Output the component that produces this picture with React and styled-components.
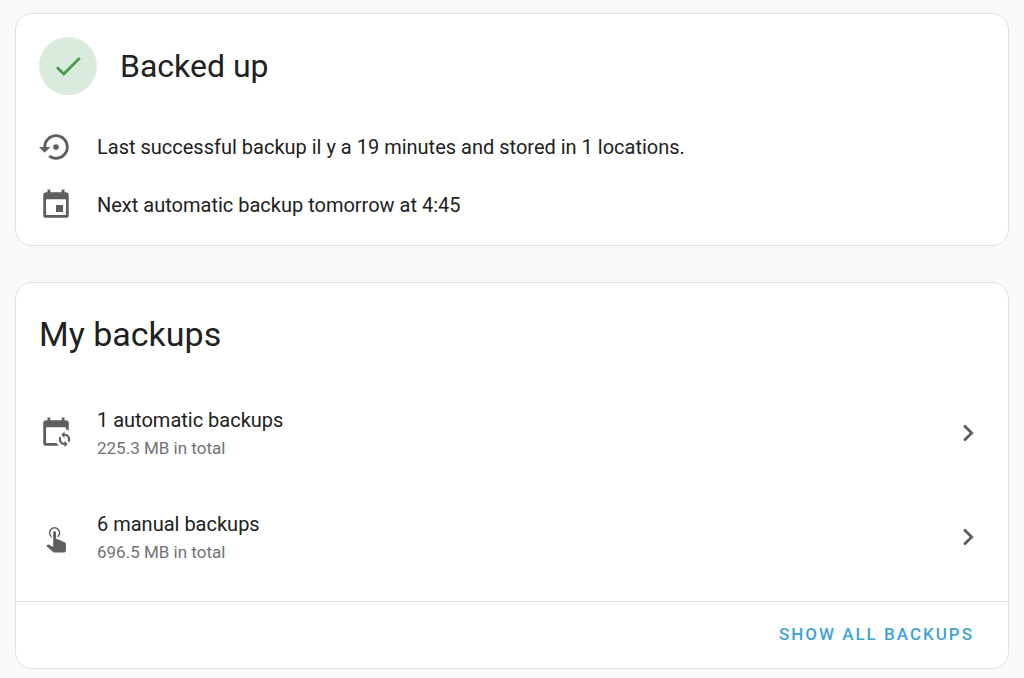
import React from 'react';
import styled, { createGlobalStyle } from 'styled-components';

const colors = {
    page: '#f9f9f9',
    card: '#ffffff',
    border: '#e0e0e0',
    text: '#212121',
    secondary: '#727272',
    icon: '#5e5e5e',
    primary: '#3fa3d3',
    success: '#43a047',
    successLight: '#d9ebdd',
};

const icons = {
    check: 'M21,7L9,19L3.5,13.5L4.91,12.09L9,16.17L19.59,5.59L21,7Z',
    restore:
        'M12,3A9,9 0 0,0 3,12H0L4,16L8,12H5A7,7 0 0,1 12,5A7,7 0 0,1 19,12A7,7 0 0,1 12,19C10.5,19 9.09,18.5 7.94,17.7L6.5,19.14C8.04,20.3 9.94,21 12,21A9,9 0 0,0 21,12A9,9 0 0,0 12,3M14,12A2,2 0 0,0 12,10A2,2 0 0,0 10,12A2,2 0 0,0 12,14A2,2 0 0,0 14,12Z',
    calendar:
        'M19,19H5V8H19M16,1V3H8V1H6V3H5C3.89,3 3,3.89 3,5V19A2,2 0 0,0 5,21H19A2,2 0 0,0 21,19V5C21,3.89 20.1,3 19,3H18V1M17,12H12V17H17V12Z',
    calendarSync:
        'M18,11V12.5C21.19,12.5 23.09,16.05 21.33,18.71L20.24,17.62C21.06,15.96 19.85,14 18,14V15.5L15.75,13.25L18,11M18,22V20.5C14.81,20.5 12.91,16.95 14.67,14.29L15.76,15.38C14.94,17.04 16.15,19 18,19V17.5L20.25,19.75L18,22M19,3H18V1H16V3H8V1H6V3H5A2,2 0 0,0 3,5V19A2,2 0 0,0 5,21H14C13.36,20.45 12.86,19.77 12.5,19H5V8H19V9.59C19.71,9.7 20.39,9.94 21,10.31V5A2,2 0 0,0 19,3Z',
    tap: 'M10,9A1,1 0 0,1 11,8A1,1 0 0,1 12,9V13.47L13.21,13.6L18.15,15.79C18.68,16.03 19,16.56 19,17.14V21.5C18.97,22.32 18.32,22.97 17.5,23H11C10.62,23 10.26,22.85 10,22.57L5.1,18.37L5.84,17.6C6.03,17.39 6.3,17.28 6.58,17.28H6.8L10,19V9M11,5A4,4 0 0,1 15,9C15,10.5 14.2,11.77 13,12.46V11.24C13.61,10.69 14,9.89 14,9A3,3 0 0,0 11,6A3,3 0 0,0 8,9C8,9.89 8.39,10.69 9,11.24V12.46C7.8,11.77 7,10.5 7,9A4,4 0 0,1 11,5Z',
    chevron: 'M8.59,16.58L13.17,12L8.59,7.41L10,6L16,12L10,18L8.59,16.58Z',
};

const GlobalStyle = createGlobalStyle`
    * {
        box-sizing: border-box;
    }
    body {
        margin: 0;
        background-color: ${colors.page};
        color: ${colors.text};
        font-family: Roboto, "Liberation Sans", sans-serif;
    }
    h1, h2, p, ul {
        margin: 0;
        padding: 0;
    }
`;

const Page = styled.main`
    display: flex;
    flex-direction: column;
    gap: 36px;
    padding: 13px 15px 9px;
`;
const Card = styled.section`
    background-color: ${colors.card};
    border: 1px solid ${colors.border};
    border-radius: 17px;
    overflow: hidden;
`;
const Summary = styled.div`
    padding: 23px;
`;
const SummaryHeader = styled.div`
    display: flex;
    align-items: center;
    gap: 23px;
    margin-bottom: 35px;
`;
const StatusBadge = styled.div`
    display: flex;
    align-items: center;
    justify-content: center;
    width: 58px;
    height: 58px;
    border-radius: 50%;
    background-color: ${colors.successLight};
    color: ${colors.success};
`;
const Title = styled.h1`
    font-size: 32px;
    font-weight: 400;
    line-height: 40px;
`;
const CardTitle = styled.h2`
    padding: 26px 23px 22px;
    font-size: 34px;
    font-weight: 400;
    line-height: 50px;
`;
const StatusList = styled.ul`
    display: flex;
    flex-direction: column;
    gap: 24px;
    list-style: none;
`;
const StatusItem = styled.li`
    display: flex;
    align-items: center;
    gap: 24px;
    font-size: 20px;
    line-height: 28px;
    color: ${colors.text};
`;
const Svg = styled.svg`
    flex: none;
    width: 34px;
    height: 34px;
    fill: currentColor;
`;
const StatusIcon = styled(Svg)`
    color: ${colors.icon};
`;
const BackupList = styled.ul`
    padding-bottom: 12px;
    list-style: none;
`;
const BackupButton = styled.button`
    display: flex;
    align-items: center;
    gap: 24px;
    width: 100%;
    height: 104px;
    padding: 0 23px;
    border: 0;
    background: none;
    color: ${colors.icon};
    font-family: inherit;
    text-align: left;
    cursor: pointer;
    &:hover {
        background-color: #f5f5f5;
    }
`;
const BackupText = styled.span`
    display: flex;
    flex: 1;
    flex-direction: column;
    padding-top: 2px;
`;
const Headline = styled.span`
    font-size: 20px;
    line-height: 28px;
    color: ${colors.text};
`;
const Supporting = styled.span`
    font-size: 17px;
    line-height: 28px;
    color: ${colors.secondary};
`;
const CardActions = styled.div`
    display: flex;
    justify-content: flex-end;
    padding: 8px 12px 10px;
    border-top: 1px solid ${colors.border};
`;
const TextLink = styled.a`
    padding: 0 22px;
    font-size: 17px;
    font-weight: 500;
    line-height: 48px;
    letter-spacing: 2px;
    text-transform: uppercase;
    text-decoration: none;
    color: ${colors.primary};
`;

function Icon({ name, as: Component = Svg }) {
    return (
        <Component viewBox="0 0 24 24" aria-hidden="true">
            <path d={icons[name]} />
        </Component>
    );
}

const statuses = [
    { icon: 'restore', text: 'Last successful backup il y a 19 minutes and stored in 1 locations.' },
    { icon: 'calendar', text: 'Next automatic backup tomorrow at 4:45' },
];

const backups = [
    { icon: 'calendarSync', title: '1 automatic backups', size: '225.3 MB in total' },
    { icon: 'tap', title: '6 manual backups', size: '696.5 MB in total' },
];

export default function App() {
    return (
        <>
            <GlobalStyle />
            <Page>
                <Card>
                    <Summary>
                        <SummaryHeader>
                            <StatusBadge>
                                <Icon name="check" />
                            </StatusBadge>
                            <Title>Backed up</Title>
                        </SummaryHeader>
                        <StatusList>
                            {statuses.map((item) => (
                                <StatusItem key={item.icon}>
                                    <Icon name={item.icon} as={StatusIcon} />
                                    <p>{item.text}</p>
                                </StatusItem>
                            ))}
                        </StatusList>
                    </Summary>
                </Card>
                <Card>
                    <CardTitle>My backups</CardTitle>
                    <BackupList>
                        {backups.map((item) => (
                            <li key={item.icon}>
                                <BackupButton type="button">
                                    <Icon name={item.icon} />
                                    <BackupText>
                                        <Headline>{item.title}</Headline>
                                        <Supporting>{item.size}</Supporting>
                                    </BackupText>
                                    <Icon name="chevron" />
                                </BackupButton>
                            </li>
                        ))}
                    </BackupList>
                    <CardActions>
                        <TextLink href="#backups">Show all backups</TextLink>
                    </CardActions>
                </Card>
            </Page>
        </>
    );
}
